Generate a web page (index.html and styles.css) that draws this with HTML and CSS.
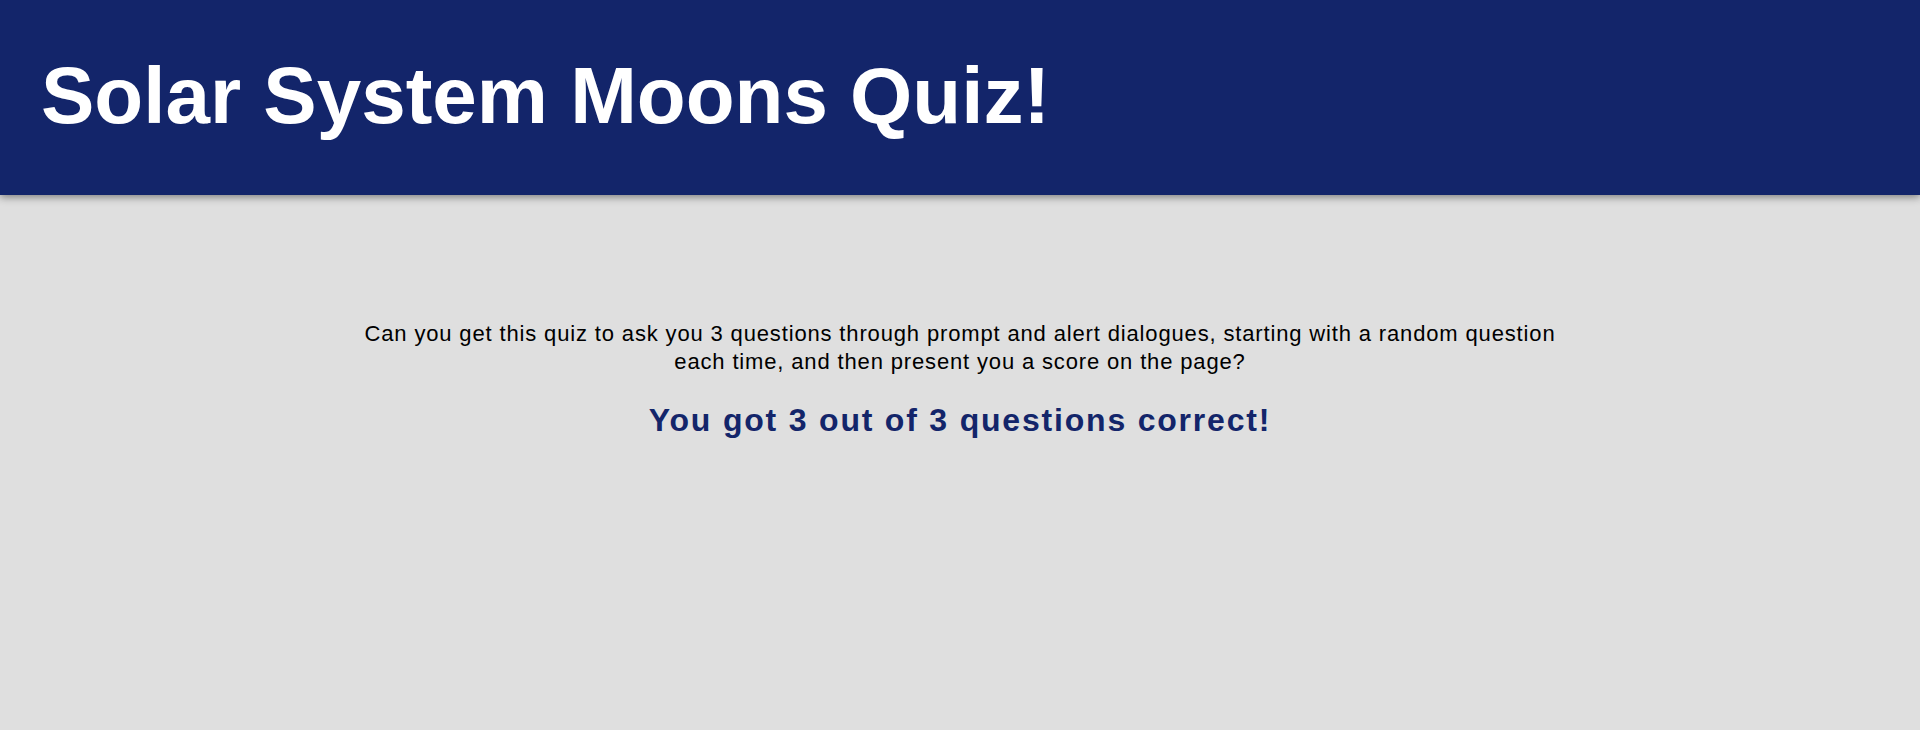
FILE: index.html
```html
<!DOCTYPE html>
<html lang="en">
<head>
<meta charset="utf-8">
<title>Solar System Moons Quiz!</title>
<link rel="stylesheet" href="styles.css">
</head>
<body>
<header class="site-header">
  <h1 class="site-title">Solar System Moons Quiz!</h1>
</header>
<main class="content">
  <p class="intro">Can you get this quiz to ask you 3 questions through prompt and alert dialogues, starting with a random question each time, and then present you a score on the page?</p>
  <h2 class="score">You got 3 out of 3 questions correct!</h2>
</main>
</body>
</html>
```

FILE: styles.css
```css
html, body {
  margin: 0;
  padding: 0;
}
body {
  background: #dfdfdf;
  font-family: "Liberation Sans", Arial, sans-serif;
  color: #000;
  min-height: 730px;
}
.site-header {
  background: #13256a;
  padding: 50px 41px 53px;
  box-shadow: 0 2px 8px rgba(0, 0, 0, 0.45);
}
.site-title {
  margin: 0;
  color: #fff;
  font-size: 80px;
  font-weight: bold;
  line-height: 92px;
}
.content {
  max-width: 1200px;
  margin: 0 auto;
  padding-top: 125px;
  text-align: center;
}
.intro {
  margin: 0;
  font-size: 22px;
  line-height: 28px;
  letter-spacing: 0.85px;
}
.score {
  margin: 26px 0 0;
  color: #13256a;
  font-size: 32px;
  font-weight: bold;
  letter-spacing: 1.8px;
}
```
